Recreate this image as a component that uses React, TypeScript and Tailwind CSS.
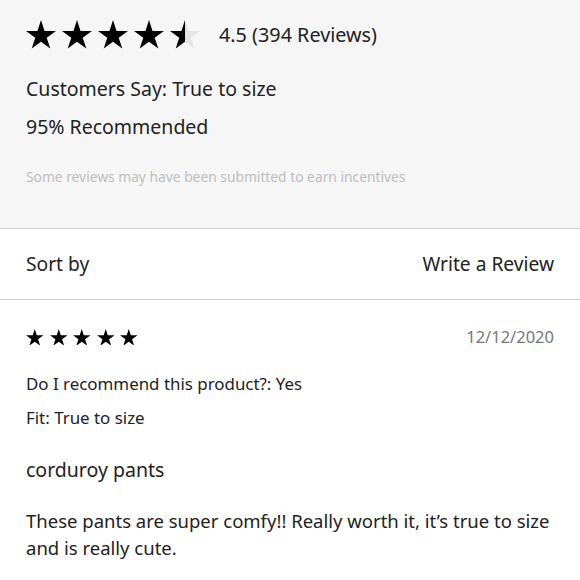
import React from "react";

const PTS =
  "0,-100 22.45,-30.9 95.1,-30.9 36.3,11.8 58.8,80.9 0,38.2 -58.8,80.9 -36.3,11.8 -95.1,-30.9 -22.45,-30.9";

function Star({ w, half = false }: { w: number; half?: boolean }) {
  const h = (w * 180.9) / 190.2;
  return (
    <svg width={w} height={h} viewBox="-95.1 -100 190.2 180.9" className="block">
      {half ? (
        <>
          <polygon points={PTS} fill="#e4e4e4" />
          <polygon points={PTS} fill="#000" style={{ clipPath: "inset(0 50% 0 0)" }} />
        </>
      ) : (
        <polygon points={PTS} fill="#000" />
      )}
    </svg>
  );
}

export default function App() {
  return (
    <div className="w-[580px] h-[580px] overflow-hidden bg-white text-[#222] font-['Noto_Sans',sans-serif]">
      <div className="bg-[#f6f6f6] px-[26px] pt-[20px] h-[229px] border-b border-[#cfcfcf]">
        <div className="flex items-center h-[29px]">
          <div className="flex gap-[6px]">
            <Star w={30} />
            <Star w={30} />
            <Star w={30} />
            <Star w={30} />
            <Star w={30} half />
          </div>
          <span className="ml-[19px] text-[19.8px] leading-[26px]">4.5 (394 Reviews)</span>
        </div>
        <div className="mt-[27px] text-[19.5px] leading-[26px]">Customers Say: True to size</div>
        <div className="mt-[12px] text-[19.5px] leading-[26px]">95% Recommended</div>
        <div className="mt-[28px] text-[13.8px] leading-[18px] text-[#bdbdbd]">
          Some reviews may have been submitted to earn incentives
        </div>
      </div>
      <div className="flex justify-between items-center px-[26px] h-[71px] border-b border-[#cfcfcf] text-[19.2px]">
        <span>Sort by</span>
        <span>Write a Review</span>
      </div>
      <div className="px-[26px] pt-[25px]">
        <div className="flex justify-between items-center h-[24px]">
          <div className="flex gap-[6px]">
            <Star w={17.5} />
            <Star w={17.5} />
            <Star w={17.5} />
            <Star w={17.5} />
            <Star w={17.5} />
          </div>
          <span className="text-[16.5px] text-[#777]">12/12/2020</span>
        </div>
        <div className="mt-[24px] text-[16.9px] leading-[22px]">Do I recommend this product?: Yes</div>
        <div className="mt-[12px] text-[16.9px] leading-[22px]">Fit: True to size</div>
        <div className="mt-[28px] text-[19.5px] leading-[26px]">corduroy pants</div>
        <div className="mt-[24px] text-[18.5px] leading-[27px] w-[530px]">
          These pants are super comfy!! Really worth it, it’s true to size and is really cute.
        </div>
      </div>
    </div>
  );
}
